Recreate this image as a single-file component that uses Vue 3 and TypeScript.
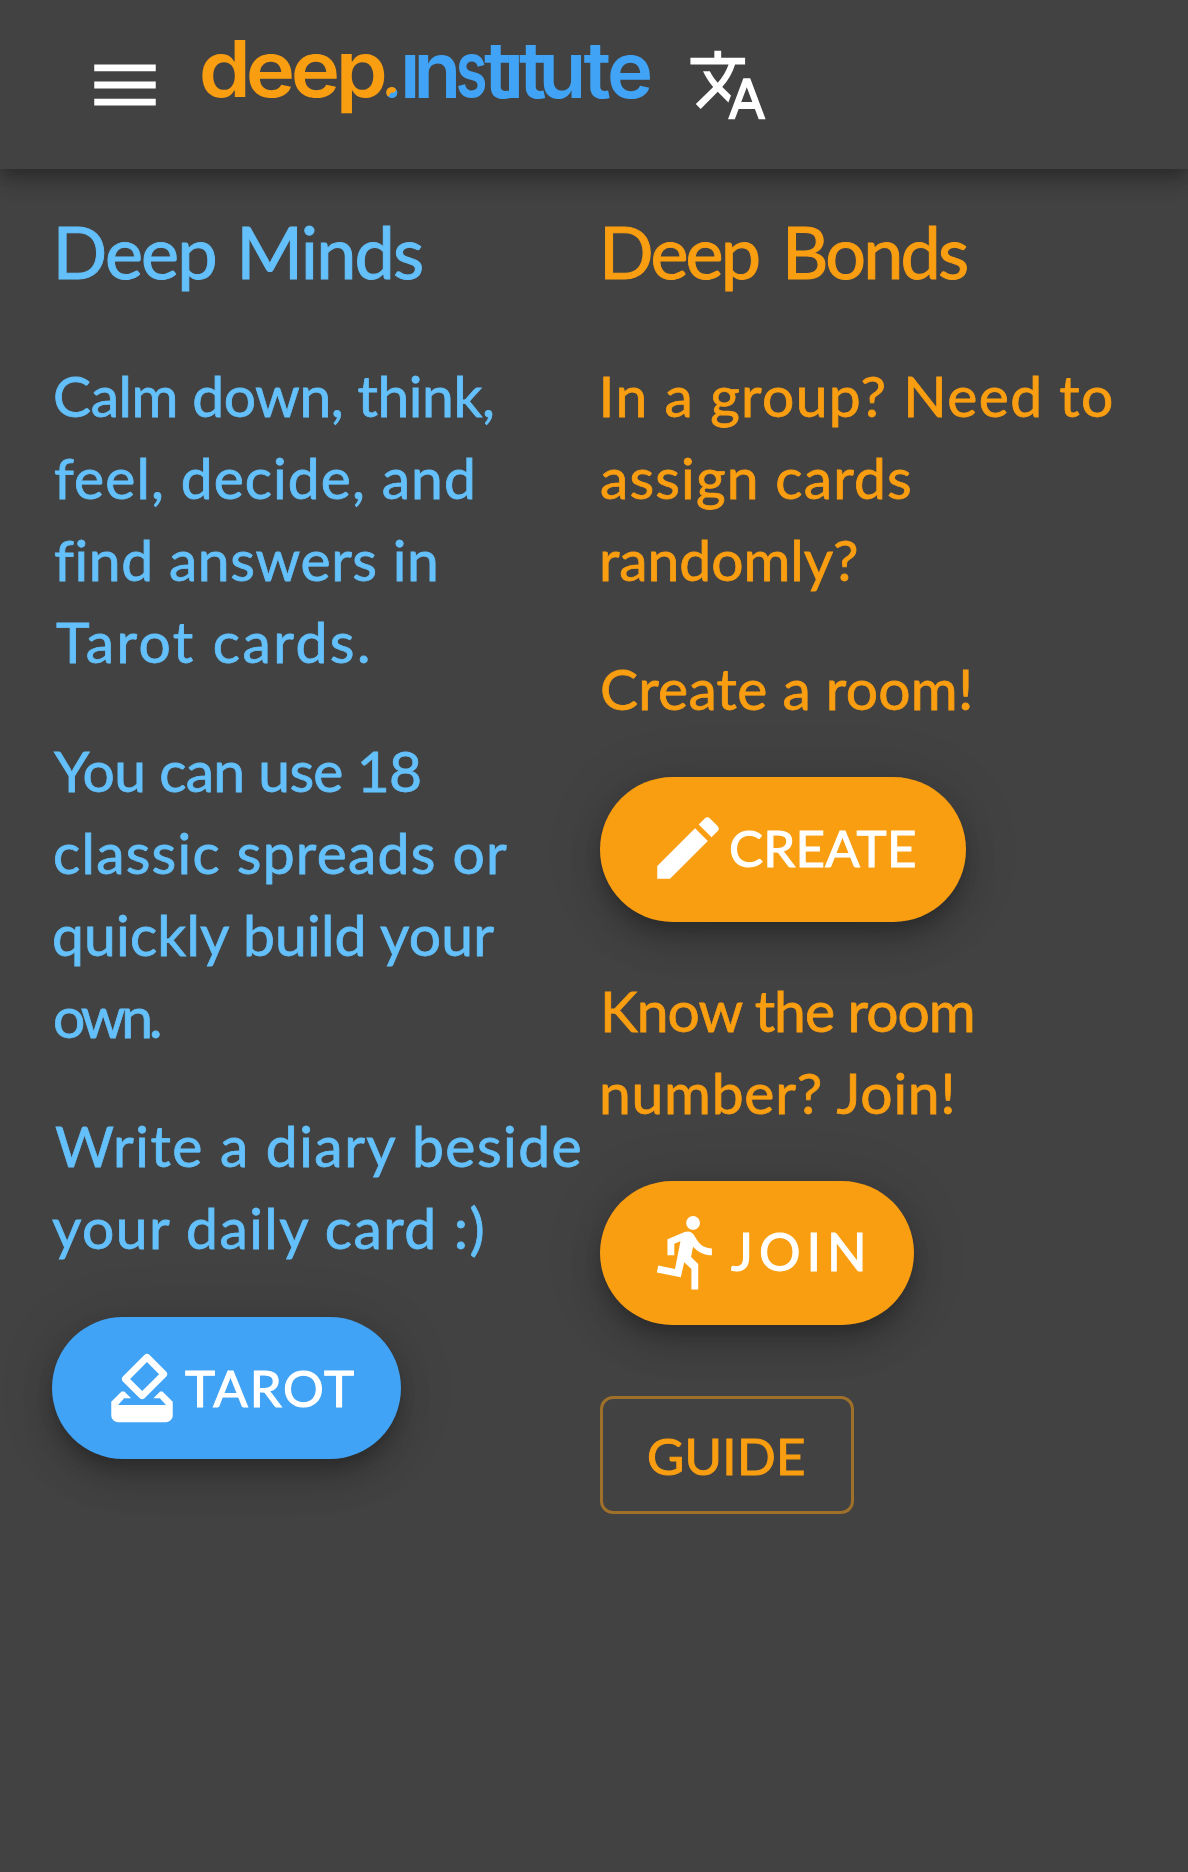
<script setup lang="ts">
interface Line {
  text: string
  left: number
  right: number
}

interface Fitted {
  text: string
  style: { letterSpacing: string; wordSpacing: string; marginLeft: string }
}

const family = 'Lato, "Open Sans", sans-serif'
const context = document.createElement('canvas').getContext('2d')!

// Spaces a line's letters so that its ink runs from `left` to `right` inside its column.
function fit(line: Line, size: number, gap: number): Fitted {
  context.font = `${size}px ${family}`
  const box = context.measureText(line.text)
  const ink = box.actualBoundingBoxLeft + box.actualBoundingBoxRight
  const gaps = (line.text.split(' ').length - 1) * gap
  const spacing = (line.right - line.left - ink - gaps) / (line.text.length - 1)
  return {
    text: line.text,
    style: {
      letterSpacing: `${spacing.toFixed(3)}px`,
      wordSpacing: `${gap}px`,
      marginLeft: `${(line.left + box.actualBoundingBoxLeft).toFixed(2)}px`,
    },
  }
}

const lines = (rows: [string, number, number][], size = 57, gap = 0): Fitted[] =>
  rows.map(([text, left, right]) => fit({ text, left, right }, size, gap))

const mindsTitle = lines([['Deep Minds', 6.5, 370]], 72, 4)[0]
const bondsTitle = lines([['Deep Bonds', 5, 367]], 72, 8)[0]

const minds = [
  lines([
    ['Calm down, think,', 3, 440],
    ['feel, decide, and', 3, 420],
    ['find answers in', 3, 383],
    ['Tarot cards.', 4, 316],
  ]),
  lines([
    ['You can use 18', 2, 368],
    ['classic spreads or', 3, 455],
    ['quickly build your', 2, 445],
    ['own.', 3, 108],
  ]),
  lines([
    ['Write a diary beside', 3, 529],
    ['your daily card :)', 0, 433],
  ]),
]

const group = lines([
  ['In a group? Need to', 3.5, 511],
  ['assign cards', 1, 310],
  ['randomly?', 3, 256],
])
const createRoom = lines([['Create a room!', 2, 370]])
const joinRoom = lines([
  ['Know the room', 5, 374],
  ['number? Join!', 3, 354],
])

const tarot = lines([['TAROT', 2, 171]], 51)[0]
const create = lines([['CREATE', 2, 186]], 51)[0]
const join = lines([['JOIN', 2, 133]], 52)[0]
const guide = lines([['GUIDE', 1, 156]], 51)[0]
</script>

<template>
  <div class="page">
    <header class="bar">
      <svg class="icon" viewBox="0 0 24 24"><path d="M3 18h18v-2H3v2zm0-5h18v-2H3v2zm0-7v2h18V6H3z" /></svg>
      <svg class="logo" viewBox="200 0 455 169">
        <text class="orange" transform="scale(1.07 1)" y="97.5" x="185.8 229.7 271.7 313.9">deep</text>
        <circle cx="392" cy="92.7" r="5.4" fill="#40a3f5" />
        <path d="M395.8 88.9A5.4 5.4 0 1 0 388.2 96.5C391 95 389 92.5 392 92.7C395 92.5 396.5 91 395.8 88.9Z" fill="#fa9e11" />
        <text class="blue" y="97.5" x="400 413.5">ın</text>
        <text class="blue" transform="scale(0.74 1)" y="97.5" x="616">s</text>
        <text class="blue" y="97.5" x="484 503.7 519 538.5 583.5 607">tıtute</text>
      </svg>
      <svg class="icon" viewBox="0 0 24 24"><path d="M12.87 15.07l-2.54-2.51.03-.03c1.74-1.94 2.98-4.17 3.71-6.53H17V4h-7V2H8v2H1v1.99h11.17C11.5 7.92 10.44 9.75 9 11.35 8.07 10.32 7.3 9.19 6.69 8h-2c.73 1.63 1.73 3.17 2.98 4.56l-5.09 5.02L4 19l5-5 3.11 3.11.76-2.04zM18.5 10h-2L12 22h2l1.12-3h4.75L21 22h2l-4.5-12zm-2.62 7l1.62-4.33L19.12 17h-3.24z" /></svg>
    </header>

    <main class="columns">
      <section class="column minds">
        <h2><span :style="mindsTitle.style">{{ mindsTitle.text }}</span></h2>
        <p v-for="(para, i) in minds" :key="i">
          <span v-for="line in para" :key="line.text" :style="line.style">{{ line.text }}</span>
        </p>
        <button class="fab tarot">
          <svg class="icon" viewBox="0 0 24 24"><path d="M18 13h-.68l-2 2h1.91L19 17H5l1.78-2h2.05l-2-2H6l-3 3v4c0 1.1.89 2 1.99 2H19c1.1 0 2-.89 2-2v-4l-3-3zm-1-5.05l-4.95 4.95-3.54-3.54 4.95-4.95L17 7.95zm-4.24-5.66L6.39 8.66c-.39.39-.39 1.02 0 1.41l4.95 4.95c.39.39 1.02.39 1.41 0l6.36-6.36c.39-.39.39-1.02 0-1.41L14.16 2.3c-.38-.4-1.01-.4-1.4-.01z" /></svg>
          <span :style="tarot.style">{{ tarot.text }}</span>
        </button>
      </section>

      <section class="column bonds">
        <h2><span :style="bondsTitle.style">{{ bondsTitle.text }}</span></h2>
        <p><span v-for="line in group" :key="line.text" :style="line.style">{{ line.text }}</span></p>
        <p><span v-for="line in createRoom" :key="line.text" :style="line.style">{{ line.text }}</span></p>
        <button class="fab create">
          <svg class="icon" viewBox="0 0 24 24"><path d="M3 17.25V21h3.75L17.81 9.94l-3.75-3.75L3 17.25zM20.71 7.04c.39-.39.39-1.02 0-1.41l-2.34-2.34c-.39-.39-1.02-.39-1.41 0l-1.83 1.83 3.75 3.75 1.83-1.83z" /></svg>
          <span :style="create.style">{{ create.text }}</span>
        </button>
        <p><span v-for="line in joinRoom" :key="line.text" :style="line.style">{{ line.text }}</span></p>
        <button class="fab join">
          <svg class="icon" viewBox="0 0 24 24"><path d="M13.49 5.48c1.1 0 2-.9 2-2s-.9-2-2-2-2 .9-2 2 .9 2 2 2zm-3.6 13.9l1-4.4 2.1 2v6h2v-7.5l-2.1-2 .6-3c1.3 1.5 3.3 2.5 5.5 2.5v-2c-1.9 0-3.5-1-4.3-2.4l-1-1.6c-.4-.6-1-1-1.7-1-.3 0-.5.1-.8.1l-5.2 2.2v4.7h2v-3.4l1.8-.7-1.6 8.1-4.9-1-.4 2 7 1.4z" /></svg>
          <span :style="join.style">{{ join.text }}</span>
        </button>
        <button class="guide"><span :style="guide.style">{{ guide.text }}</span></button>
      </section>
    </main>
  </div>
</template>

<style>
body {
  background: #424242;
}
</style>

<style scoped>
.page {
  height: 1872px;
  overflow: hidden;
  background: #424242;
  font-family: Lato, "Open Sans", sans-serif;
}
.bar {
  position: relative;
  z-index: 1;
  display: flex;
  align-items: center;
  box-sizing: border-box;
  height: 169px;
  padding-left: 84.4px;
  background: #424242;
  box-shadow: 0 7px 14px -3px rgba(0, 0, 0, 0.2), 0 14px 17px rgba(0, 0, 0, 0.14), 0 3px 34px rgba(0, 0, 0, 0.12);
}
.icon {
  flex: none;
  display: block;
  width: 82px;
  height: 82px;
  fill: #fff;
}
.logo {
  flex: none;
  width: 455px;
  height: 169px;
  margin: 0 32px 0 33.6px;
  overflow: visible;
  font: 600 78px Inter, sans-serif;
}
.orange {
  fill: #fa9e11;
}
.blue {
  fill: #40a3f5;
}
.columns {
  display: flex;
  padding: 32px 0 0 52px;
}
.column {
  width: 548px;
  display: flex;
  flex-direction: column;
  align-items: flex-start;
}
.minds {
  color: #64c0fa;
}
.bonds {
  color: #fa9e11;
}
h2 {
  margin: 0 0 53px;
  font-size: 72px;
  line-height: 100px;
  font-weight: 400;
  white-space: nowrap;
  -webkit-text-stroke: 1px currentColor;
}
h2 span,
p span {
  display: block;
}
p {
  margin: 0 0 47px;
  font-size: 57px;
  line-height: 82px;
  white-space: nowrap;
  -webkit-text-stroke: 0.8px currentColor;
}
button {
  display: flex;
  align-items: center;
  box-sizing: border-box;
  margin: 0;
  border: 0;
  font: 400 51px/61px Lato, "Open Sans", sans-serif;
  white-space: nowrap;
  -webkit-text-stroke: 1.1px currentColor;
}
.fab {
  height: 144.5px;
  padding: 0 0 3px 47px;
  border-radius: 72.5px;
  background: #fa9e11;
  color: #fff;
  box-shadow: 0 10px 17px -3px rgba(0, 0, 0, 0.2), 0 21px 34px rgba(0, 0, 0, 0.14), 0 3px 62px rgba(0, 0, 0, 0.12);
}
.tarot {
  width: 349px;
  height: 142px;
  margin-top: 2px;
  padding: 0 0 1px 49px;
  background: #40a3f5;
}
.create {
  width: 365.5px;
  margin: 1px 0 47px;
}
.join {
  width: 314px;
  margin: 1px 0 71px;
  padding-bottom: 2px;
  font-size: 52px;
}
.guide {
  width: 254px;
  height: 117.5px;
  padding: 2px 0 0 45px;
  border: 3px solid rgba(250, 158, 17, 0.5);
  border-radius: 13px;
  background: transparent;
  color: #fa9e11;
}
</style>
